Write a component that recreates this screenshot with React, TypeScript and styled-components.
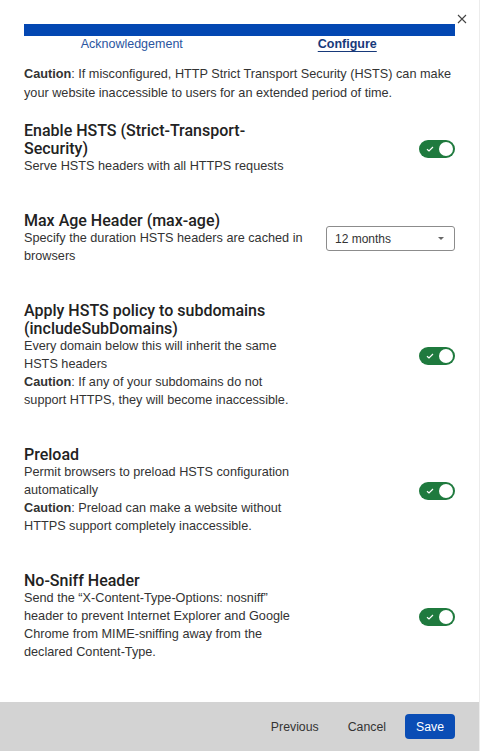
import styled, { createGlobalStyle } from "styled-components"

const GlobalStyle = createGlobalStyle`
	html, body {
		margin: 0;
		padding: 0;
		background: #ffffff;
	}
	* {
		box-sizing: border-box;
	}
`

const Modal = styled.div`
	position: relative;
	width: 100%;
	height: 751px;
	display: flex;
	flex-direction: column;
	background: #ffffff;
	border-right: 1px solid #ececec;
	font-family: "Liberation Sans", Arial, sans-serif;
	color: #333333;
`

const CloseButton = styled.button`
	position: absolute;
	top: 12px;
	right: 10px;
	width: 14px;
	height: 14px;
	padding: 0;
	border: none;
	background: transparent;
	cursor: pointer;
	display: flex;
	align-items: center;
	justify-content: center;
`

const Content = styled.div`
	flex: 1;
	padding: 24px 24px 0;
	display: flex;
	flex-direction: column;
`

const Progress = styled.div`
	height: 12px;
	background: #0347b2;
`

const Tabs = styled.div`
	display: grid;
	grid-template-columns: 1fr 1fr;
	height: 16px;
`

const Tab = styled.span<{ $active?: boolean }>`
	text-align: center;
	font-size: 12.5px;
	line-height: 16px;
	color: ${(p) => (p.$active ? "#17397a" : "#2a55a0")};
	font-weight: ${(p) => (p.$active ? 700 : 400)};
	text-decoration: ${(p) => (p.$active ? "underline" : "none")};
	text-underline-offset: 3px;
`

const Caution = styled.p`
	margin: 13px 0 0;
	font-size: 12.7px;
	line-height: 19px;
`

const Sections = styled.div`
	margin-top: 19px;
	display: flex;
	flex-direction: column;
	gap: 37px;
`

const Section = styled.div`
	display: grid;
	grid-template-columns: 282px 1fr;
	align-items: center;
`

const Title = styled.h3`
	margin: 0 0 -1px;
	font-family: Roboto, "Liberation Sans", sans-serif;
	font-weight: 500;
	font-size: 16px;
	line-height: 18px;
	color: #222222;
`

const Desc = styled.p`
	margin: 0;
	font-size: 12.7px;
	line-height: 18px;
	color: #333333;
`

const Control = styled.div`
	display: flex;
	justify-content: flex-end;
	align-items: center;
`

const Track = styled.span`
	position: relative;
	width: 36px;
	height: 18px;
	border-radius: 9px;
	background: #1f7a3e;
	display: inline-flex;
	align-items: center;
`

const Knob = styled.span`
	position: absolute;
	right: 2px;
	top: 2px;
	width: 14px;
	height: 14px;
	border-radius: 50%;
	background: #ffffff;
`

const Select = styled.div`
	width: 129px;
	height: 25px;
	border: 1px solid #8c8c8c;
	border-radius: 3px;
	padding: 0 8px 0 8px;
	display: flex;
	align-items: center;
	justify-content: space-between;
	font-size: 12px;
	color: #333333;
`

const Caret = styled.span`
	width: 0;
	height: 0;
	border-left: 3px solid transparent;
	border-right: 3px solid transparent;
	border-top: 3px solid #666666;
	margin-right: 2px;
`

const Footer = styled.div`
	height: 49px;
	background: #d3d3d3;
	display: flex;
	justify-content: flex-end;
	align-items: center;
	gap: 9px;
	padding-right: 24px;
`

const FooterButton = styled.button<{ $primary?: boolean }>`
	height: 25px;
	padding: 0 ${(p) => (p.$primary ? "11px" : "10px")};
	border: none;
	border-radius: 4px;
	background: ${(p) => (p.$primary ? "#0a4db5" : "transparent")};
	color: ${(p) => (p.$primary ? "#ffffff" : "#333333")};
	font-family: "Liberation Sans", Arial, sans-serif;
	font-size: 12.3px;
	cursor: pointer;
`

const Toggle = () => (
	<Track>
		<svg width="8" height="6" viewBox="0 0 8 6" style={{ marginLeft: 7 }}>
			<path d="M1 3.2 L3 5 L7 1" fill="none" stroke="#ffffff" strokeWidth="1.2" />
		</svg>
		<Knob />
	</Track>
)

const sections = [
	{
		title: "Enable HSTS (Strict-Transport-Security)",
		desc: <>Serve HSTS headers with all HTTPS requests</>,
		control: "toggle",
	},
	{
		title: "Max Age Header (max-age)",
		desc: <>Specify the duration HSTS headers are cached in browsers</>,
		control: "select",
	},
	{
		title: "Apply HSTS policy to subdomains (includeSubDomains)",
		desc: (
			<>
				Every domain below this will inherit the same HSTS headers
				<br />
				<b>Caution</b>: If any of your subdomains do not support HTTPS, they will become inaccessible.
			</>
		),
		control: "toggle",
	},
	{
		title: "Preload",
		desc: (
			<>
				Permit browsers to preload HSTS configuration automatically
				<br />
				<b>Caution</b>: Preload can make a website without HTTPS support completely inaccessible.
			</>
		),
		control: "toggle",
	},
	{
		title: "No-Sniff Header",
		desc: (
			<>
				Send the “X-Content-Type-Options: nosniff” header to prevent Internet Explorer and Google
				Chrome from MIME-sniffing away from the declared Content-Type.
			</>
		),
		control: "toggle",
	},
]

const App = () => {
	return (
		<>
			<GlobalStyle />
			<Modal>
				<CloseButton aria-label="Close">
					<svg width="10" height="10" viewBox="0 0 10 10">
						<path d="M1 1 L9 9 M9 1 L1 9" stroke="#444444" strokeWidth="1.1" />
					</svg>
				</CloseButton>
				<Content>
					<Progress />
					<Tabs>
						<Tab>Acknowledgement</Tab>
						<Tab $active>Configure</Tab>
					</Tabs>
					<Caution>
						<b>Caution</b>: If misconfigured, HTTP Strict Transport Security (HSTS) can make your
						website inaccessible to users for an extended period of time.
					</Caution>
					<Sections>
						{sections.map((s, i) => (
							<Section key={i}>
								<div>
									<Title>{s.title}</Title>
									<Desc>{s.desc}</Desc>
								</div>
								<Control>
									{s.control === "toggle" ? (
										<Toggle />
									) : (
										<Select>
											12 months
											<Caret />
										</Select>
									)}
								</Control>
							</Section>
						))}
					</Sections>
				</Content>
				<Footer>
					<FooterButton>Previous</FooterButton>
					<FooterButton>Cancel</FooterButton>
					<FooterButton $primary>Save</FooterButton>
				</Footer>
			</Modal>
		</>
	)
}

export default App
